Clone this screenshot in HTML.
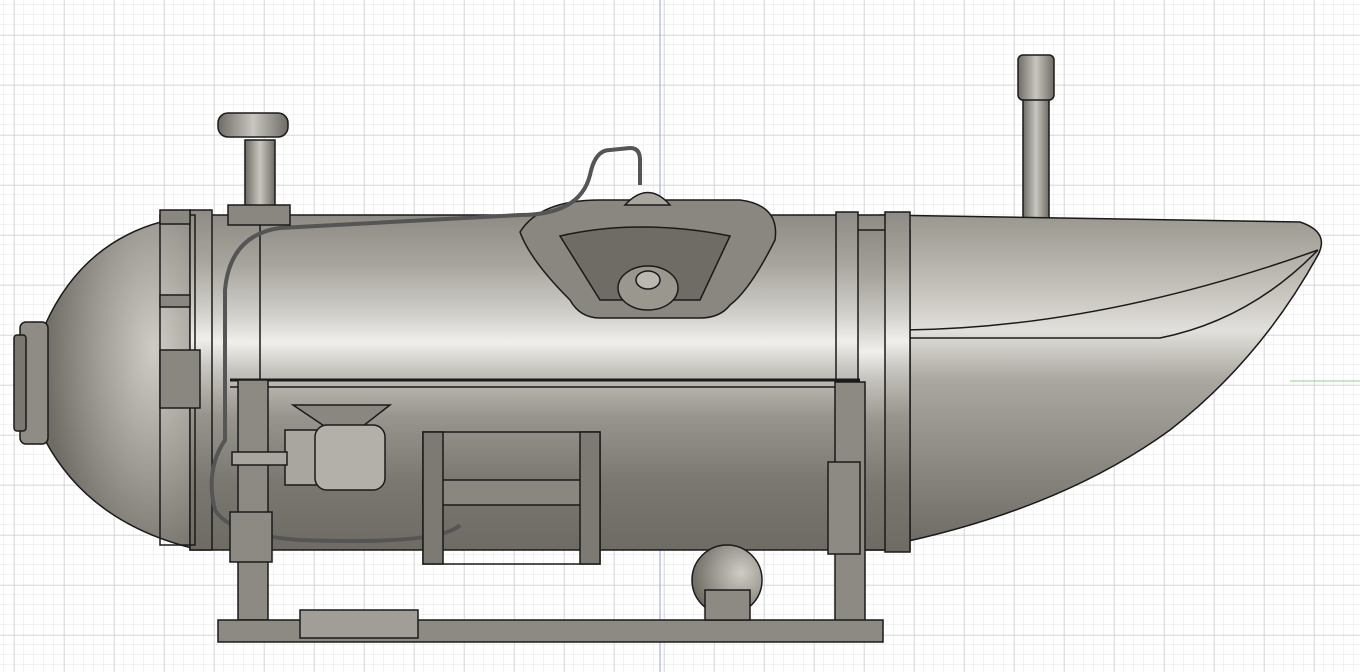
<!DOCTYPE html>
<html><head><style>
html,body{margin:0;padding:0;width:1360px;height:672px;overflow:hidden;background:#fff}
svg{display:block}
</style></head><body>
<svg width="1360" height="672" viewBox="0 0 1360 672" xmlns="http://www.w3.org/2000/svg">
<defs>
<pattern id="minor" width="10" height="10" patternUnits="userSpaceOnUse" x="4" y="5">
<path d="M10 0V10M0 10H10" stroke="#e6e6e6" stroke-width="1" fill="none"/>
</pattern>
<pattern id="major" width="50" height="50" patternUnits="userSpaceOnUse" x="14.5" y="35.5">
<path d="M0 0V50M0 0H50" stroke="#c4c4c4" stroke-width="1" fill="none"/>
</pattern>
<linearGradient id="cyl" x1="0" y1="0" x2="0" y2="1">
<stop offset="0" stop-color="#8e8b84"/>
<stop offset="0.15" stop-color="#a8a59e"/>
<stop offset="0.3" stop-color="#d2d0cb"/>
<stop offset="0.38" stop-color="#f0efec"/>
<stop offset="0.46" stop-color="#c8c6c0"/>
<stop offset="0.6" stop-color="#98958e"/>
<stop offset="0.8" stop-color="#7a7770"/>
<stop offset="1" stop-color="#6e6b65"/>
</linearGradient>
<radialGradient id="dome" cx="0.7" cy="0.4" r="0.7">
<stop offset="0" stop-color="#cfccc6"/>
<stop offset="0.5" stop-color="#a19e97"/>
<stop offset="1" stop-color="#6f6c66"/>
</radialGradient>
<linearGradient id="nose" x1="0" y1="0" x2="0" y2="1">
<stop offset="0" stop-color="#9a978f"/>
<stop offset="0.25" stop-color="#cac7c1"/>
<stop offset="0.35" stop-color="#e2e0dc"/>
<stop offset="0.5" stop-color="#aaa7a0"/>
<stop offset="1" stop-color="#6e6b65"/>
</linearGradient>
<linearGradient id="metal" x1="0" y1="0" x2="1" y2="0">
<stop offset="0" stop-color="#6e6b65"/>
<stop offset="0.5" stop-color="#c9c6c0"/>
<stop offset="1" stop-color="#6e6b65"/>
</linearGradient>
</defs>
<rect width="1360" height="672" fill="#fff"/>
<rect width="1360" height="672" fill="url(#minor)"/>
<rect width="1360" height="672" fill="url(#major)"/>
<line x1="660" y1="0" x2="660" y2="672" stroke="#9aa0e0" stroke-width="1"/>
<line x1="1290" y1="381" x2="1360" y2="381" stroke="#8fd08f" stroke-width="1"/>

<g stroke="#1a1a1a" stroke-width="1.5">
<!-- snorkel -->
<rect x="1023" y="90" width="26" height="132" fill="url(#metal)"/>
<rect x="1018" y="55" width="36" height="45" rx="5" fill="url(#metal)"/>
<!-- nose -->
<path d="M880 215 L1300 222 Q1330 232 1318 255 Q1260 360 1170 430 Q1060 510 890 545 Z" fill="url(#nose)"/>
<path d="M905 330 Q1100 328 1318 250" fill="none"/>
<path d="M905 338 L1160 338 Q1250 320 1318 250" fill="none"/>
<!-- left dome -->
<path d="M200 215 Q90 225 45 325 L45 440 Q90 525 200 550 Z" fill="url(#dome)"/>
<rect x="20" y="322" width="28" height="122" rx="6" fill="#8f8c86"/>
<rect x="14" y="335" width="12" height="96" rx="3" fill="#7a7771"/>
<!-- main cylinder -->
<rect x="190" y="215" width="700" height="335" fill="url(#cyl)"/>
<rect x="855" y="230" width="55" height="320" fill="url(#cyl)"/>
<!-- flanges -->
<rect x="190" y="210" width="22" height="340" fill="url(#cyl)"/>
<rect x="160" y="215" width="35" height="330" fill="none"/>
<rect x="885" y="212" width="25" height="340" fill="url(#cyl)"/>
<rect x="836" y="212" width="22" height="340" fill="url(#cyl)"/>
<line x1="260" y1="220" x2="260" y2="545"/>
<line x1="230" y1="380" x2="860" y2="380" stroke-width="3"/>
<line x1="230" y1="387" x2="860" y2="387"/>
<rect x="160" y="350" width="40" height="58" fill="#8a8781"/>
<rect x="160" y="210" width="30" height="14" fill="#8a8781"/>
<rect x="160" y="295" width="30" height="12" fill="#8a8781"/>
<!-- top hatch -->
<path d="M520 232 Q540 200 600 200 L740 200 Q780 205 775 240 Q750 290 730 305 Q720 318 700 318 L600 318 Q580 318 570 300 Q530 260 520 232 Z" fill="#8a8781"/>
<path d="M560 236 Q640 218 730 236 L700 300 L600 300 Z" fill="#6f6c66"/>
<ellipse cx="648" cy="288" rx="30" ry="22" fill="#9a978f"/>
<ellipse cx="648" cy="280" rx="12" ry="9" fill="#bbb8b1"/>
<path d="M625 205 Q648 180 670 205 Z" fill="#a9a6a0"/>
<path d="M640 185 L640 160 Q640 148 630 148 L610 150 Q595 150 590 175 Q580 215 520 215 L280 228 Q230 235 225 290 L225 440 Q205 470 215 510 Q230 535 300 540 Q440 545 460 525" fill="none" stroke="#555" stroke-width="4"/>
<!-- valve top left -->
<rect x="245" y="140" width="30" height="68" fill="url(#metal)"/>
<rect x="218" y="113" width="70" height="24" rx="10" fill="url(#metal)"/>
<rect x="228" y="205" width="62" height="20" fill="#8a8781"/>
<!-- frame -->
<rect x="238" y="380" width="30" height="240" fill="#8d8a84"/>
<rect x="230" y="512" width="42" height="50" fill="#8d8a84"/>
<rect x="835" y="382" width="30" height="240" fill="#8d8a84"/>
<rect x="828" y="462" width="32" height="92" fill="#8d8a84"/>
<rect x="218" y="620" width="665" height="22" fill="#8d8a84"/>
<rect x="300" y="610" width="118" height="28" fill="#a19e98"/>
<!-- side device -->
<path d="M293 405 L390 405 L345 440 Z" fill="#8a8781"/>
<rect x="285" y="430" width="35" height="55" fill="#a9a6a0"/>
<rect x="315" y="425" width="70" height="65" rx="12" fill="#b3b0aa"/>
<rect x="232" y="452" width="55" height="13" fill="#a9a6a0"/>
<!-- box -->
<rect x="423" y="432" width="177" height="132" fill="none"/>
<rect x="423" y="480" width="177" height="25" fill="#8a8781"/>
<rect x="423" y="432" width="20" height="132" fill="#7d7a74"/>
<rect x="580" y="432" width="20" height="132" fill="#7d7a74"/>
<!-- wheel -->
<circle cx="727" cy="580" r="35" fill="url(#dome)"/>
<rect x="705" y="590" width="45" height="30" fill="#8d8a84"/>
</g>
</svg>
</body></html>
